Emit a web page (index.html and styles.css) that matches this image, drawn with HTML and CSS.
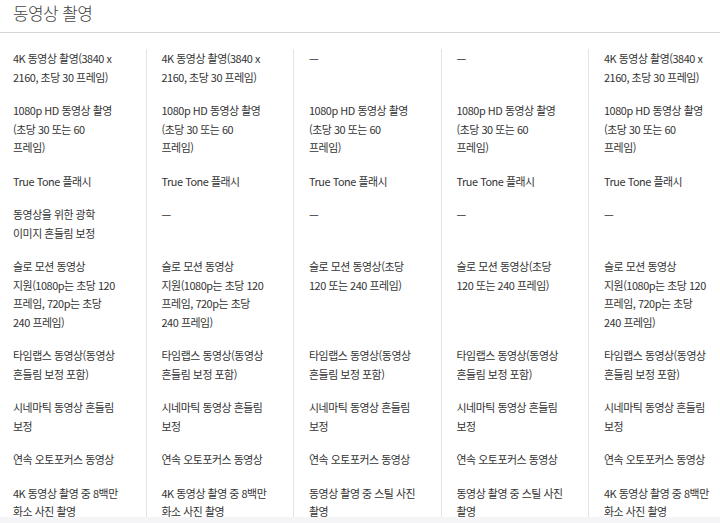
FILE: index.html
```html
<!DOCTYPE html>
<html lang="ko">
<head>
<meta charset="utf-8">
<link rel="stylesheet" href="styles.css">
</head>
<body>
<section class="section">
  <h2 class="title">동영상 촬영</h2>
  <div class="table">
    <div class="cell">4K 동영상 촬영(3840 x<br>2160, 초당 30 프레임)</div>
    <div class="cell">4K 동영상 촬영(3840 x<br>2160, 초당 30 프레임)</div>
    <div class="cell">—</div>
    <div class="cell">—</div>
    <div class="cell">4K 동영상 촬영(3840 x<br>2160, 초당 30 프레임)</div>

    <div class="cell">1080p HD 동영상 촬영<br>(초당 30 또는 60<br>프레임)</div>
    <div class="cell">1080p HD 동영상 촬영<br>(초당 30 또는 60<br>프레임)</div>
    <div class="cell">1080p HD 동영상 촬영<br>(초당 30 또는 60<br>프레임)</div>
    <div class="cell">1080p HD 동영상 촬영<br>(초당 30 또는 60<br>프레임)</div>
    <div class="cell">1080p HD 동영상 촬영<br>(초당 30 또는 60<br>프레임)</div>

    <div class="cell">True Tone 플래시</div>
    <div class="cell">True Tone 플래시</div>
    <div class="cell">True Tone 플래시</div>
    <div class="cell">True Tone 플래시</div>
    <div class="cell">True Tone 플래시</div>

    <div class="cell">동영상을 위한 광학<br>이미지 흔들림 보정</div>
    <div class="cell">—</div>
    <div class="cell">—</div>
    <div class="cell">—</div>
    <div class="cell">—</div>

    <div class="cell">슬로 모션 동영상<br>지원(1080p는 초당 120<br>프레임, 720p는 초당<br>240 프레임)</div>
    <div class="cell">슬로 모션 동영상<br>지원(1080p는 초당 120<br>프레임, 720p는 초당<br>240 프레임)</div>
    <div class="cell">슬로 모션 동영상(초당<br>120 또는 240 프레임)</div>
    <div class="cell">슬로 모션 동영상(초당<br>120 또는 240 프레임)</div>
    <div class="cell">슬로 모션 동영상<br>지원(1080p는 초당 120<br>프레임, 720p는 초당<br>240 프레임)</div>

    <div class="cell">타임랩스 동영상(동영상<br>흔들림 보정 포함)</div>
    <div class="cell">타임랩스 동영상(동영상<br>흔들림 보정 포함)</div>
    <div class="cell">타임랩스 동영상(동영상<br>흔들림 보정 포함)</div>
    <div class="cell">타임랩스 동영상(동영상<br>흔들림 보정 포함)</div>
    <div class="cell">타임랩스 동영상(동영상<br>흔들림 보정 포함)</div>

    <div class="cell">시네마틱 동영상 흔들림<br>보정</div>
    <div class="cell">시네마틱 동영상 흔들림<br>보정</div>
    <div class="cell">시네마틱 동영상 흔들림<br>보정</div>
    <div class="cell">시네마틱 동영상 흔들림<br>보정</div>
    <div class="cell">시네마틱 동영상 흔들림<br>보정</div>

    <div class="cell">연속 오토포커스 동영상</div>
    <div class="cell">연속 오토포커스 동영상</div>
    <div class="cell">연속 오토포커스 동영상</div>
    <div class="cell">연속 오토포커스 동영상</div>
    <div class="cell">연속 오토포커스 동영상</div>

    <div class="cell">4K 동영상 촬영 중 8백만<br>화소 사진 촬영</div>
    <div class="cell">4K 동영상 촬영 중 8백만<br>화소 사진 촬영</div>
    <div class="cell">동영상 촬영 중 스틸 사진<br>촬영</div>
    <div class="cell">동영상 촬영 중 스틸 사진<br>촬영</div>
    <div class="cell">4K 동영상 촬영 중 8백만<br>화소 사진 촬영</div>
  </div>
</section>
<div class="fade"></div>
</body>
</html>
```

FILE: styles.css
```css
html, body {
  margin: 0;
  padding: 0;
  background: #fff;
  overflow: hidden;
}
body {
  font-family: "Noto Sans CJK KR", "Noto Sans", sans-serif;
  color: #333;
}
.section {
  width: 740px;
  margin-left: -2px;
}
.title {
  margin: 0;
  padding: 1px 0 0 15px;
  height: 32px;
  font-size: 17px;
  line-height: 24px;
  letter-spacing: -0.6px;
  font-weight: 300;
  color: #444;
  box-sizing: border-box;
}
.table {
  display: grid;
  grid-template-columns: repeat(5, 147.5px);
  border-top: 1px solid #d6d6d6;
  padding-top: 16px;
}
.cell {
  font-size: 10.9px;
  line-height: 18.5px;
  letter-spacing: -0.45px;
  padding: 0 10px 15px 15px;
  border-left: 1px solid #e3e3e3;
  white-space: nowrap;
  overflow: hidden;
}
.cell:nth-child(5n+1) {
  border-left: none;
}
.fade {
  position: fixed;
  left: 0;
  right: 0;
  bottom: 0;
  height: 6px;
  background: #f5f5f7;
}
```
